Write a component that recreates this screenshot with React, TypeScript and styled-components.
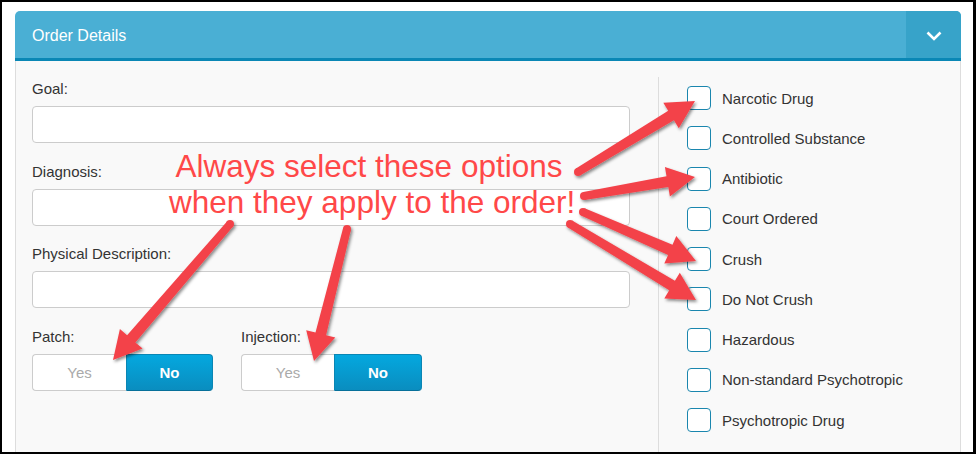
import React from "react";
import styled, { createGlobalStyle } from "styled-components";

const GlobalStyle = createGlobalStyle`
  html, body { margin: 0; padding: 0; background: #fff; }
  * { box-sizing: border-box; }
  body { font-family: "Liberation Sans", Arial, sans-serif; }
`;

const Page = styled.div`
  position: relative;
  width: 976px;
  height: 454px;
  border: 2px solid #000;
  border-right-width: 3px;
  background: #fff;
  padding: 9px 11px 0 13px;
  overflow: hidden;
  display: flex;
  flex-direction: column;
`;

const Panel = styled.div`
  width: 946px;
  height: 470px;
  display: flex;
  flex-direction: column;
  flex-shrink: 0;
`;

const Header = styled.div`
  height: 50px;
  display: flex;
  align-items: stretch;
  background: #4aafd4;
  border-bottom: 3px solid #0a87b5;
  border-radius: 5px 5px 0 0;
`;

const Title = styled.div`
  flex: 1;
  display: flex;
  align-items: center;
  padding: 3px 0 0 17px;
  color: #fff;
  font-size: 16px;
`;

const Collapse = styled.div`
  width: 55px;
  display: flex;
  align-items: center;
  justify-content: center;
  padding-top: 2px;
  background: #37a3c9;
  border-top-right-radius: 5px;
`;

const Body = styled.div`
  flex: 1;
  display: flex;
  background: #f9f9f9;
  border-left: 1px solid #ddd;
  border-right: 1px solid #ddd;
  padding-top: 16px;
`;

const LeftCol = styled.div`
  width: 642px;
  padding: 2px 28px 0 16px;
  display: flex;
  flex-direction: column;
`;

const RightCol = styled.div`
  flex: 1;
  border-left: 1px solid #ddd;
  padding: 9px 0 0 28px;
  display: flex;
  flex-direction: column;
  gap: 16.25px;
`;

const Field = styled.div`
  display: flex;
  flex-direction: column;
  gap: 7px;
  margin-bottom: 18.5px;
`;

const Label = styled.div`
  font-size: 15px;
  line-height: 20px;
  color: #333;
`;

const Input = styled.div`
  height: 37px;
  background: #fff;
  border: 1px solid #ccc;
  border-radius: 4px;
`;

const ToggleRow = styled.div`
  display: flex;
  gap: 28px;
`;

const Toggle = styled.div`
  width: 181px;
  height: 37px;
  display: flex;
`;

const ToggleOption = styled.div<{ $active?: boolean; $w: number }>`
  width: ${(p) => p.$w}px;
  display: flex;
  align-items: center;
  justify-content: center;
  font-size: 15px;
  font-weight: ${(p) => (p.$active ? 700 : 400)};
  color: ${(p) => (p.$active ? "#fff" : "#aaa")};
  background: ${(p) =>
    p.$active ? "linear-gradient(#04a8df, #0a8dbf)" : "#fff"};
  border: 1px solid ${(p) => (p.$active ? "#0a86b4" : "#ccc")};
  border-bottom-color: ${(p) => (p.$active ? "#07709a" : "#ccc")};
  border-right-width: ${(p) => (p.$active ? 1 : 0)}px;
  border-radius: ${(p) => (p.$active ? "0 4px 4px 0" : "4px 0 0 4px")};
`;

const CheckRow = styled.div`
  display: flex;
  align-items: center;
  height: 24px;
  gap: 11px;
`;

const Box = styled.div`
  width: 24px;
  height: 24px;
  background: #fff;
  border: 1px solid #1a86ae;
  border-radius: 4px;
`;

const CheckText = styled.span`
  font-size: 15px;
  color: #333;
`;

const Overlay = styled.div`
  position: absolute;
  left: -2px;
  top: -2px;
  width: 976px;
  height: 454px;
  pointer-events: none;
`;

const Note = styled.div`
  position: absolute;
  left: 169px;
  top: 148px;
  width: 400px;
  text-align: center;
  white-space: nowrap;
  font-size: 31.5px;
  line-height: 36px;
  color: #ff4848;
`;

const ArrowSvg = styled.svg`
  position: absolute;
  left: 0;
  top: 0;
`;

type Pt = [number, number];

function arrowPoints(tail: Pt, tip: Pt) {
  const dx = tip[0] - tail[0];
  const dy = tip[1] - tail[1];
  const len = Math.hypot(dx, dy);
  const ux = dx / len;
  const uy = dy / len;
  const nx = -uy;
  const ny = ux;
  const headLen = 28;
  const headHalf = 15;
  const w0 = 4;
  const w1 = 5.5;
  const bx = tip[0] - ux * headLen;
  const by = tip[1] - uy * headLen;
  const pts: Pt[] = [
    [tail[0] + nx * w0, tail[1] + ny * w0],
    [bx + nx * w1, by + ny * w1],
    [bx + nx * headHalf, by + ny * headHalf],
    tip,
    [bx - nx * headHalf, by - ny * headHalf],
    [bx - nx * w1, by - ny * w1],
    [tail[0] - nx * w0, tail[1] - ny * w0],
  ];
  return pts.map((p) => `${p[0].toFixed(1)},${p[1].toFixed(1)}`).join(" ");
}

const arrows: [Pt, Pt][] = [
  [[578, 172], [695, 101]],
  [[584, 196], [695, 177]],
  [[583, 212], [696, 261]],
  [[570, 224], [696, 300]],
  [[230, 224], [113, 360]],
  [[347, 229], [314, 361]],
];

const checks = [
  "Narcotic Drug",
  "Controlled Substance",
  "Antibiotic",
  "Court Ordered",
  "Crush",
  "Do Not Crush",
  "Hazardous",
  "Non-standard Psychotropic",
  "Psychotropic Drug",
];

export default function App() {
  return (
    <>
      <GlobalStyle />
      <Page>
        <Panel>
          <Header>
            <Title>Order Details</Title>
            <Collapse>
              <svg width="16" height="10" viewBox="0 0 16 10">
                <polyline
                  points="1.5,1.5 8,8 14.5,1.5"
                  fill="none"
                  stroke="#fff"
                  strokeWidth="2.6"
                />
              </svg>
            </Collapse>
          </Header>
          <Body>
            <LeftCol>
              <Field>
                <Label>Goal:</Label>
                <Input />
              </Field>
              <Field>
                <Label>Diagnosis:</Label>
                <Input />
              </Field>
              <Field>
                <Label>Physical Description:</Label>
                <Input />
              </Field>
              <ToggleRow>
                <Field>
                  <Label>Patch:</Label>
                  <Toggle>
                    <ToggleOption $w={94}>Yes</ToggleOption>
                    <ToggleOption $w={87} $active>
                      No
                    </ToggleOption>
                  </Toggle>
                </Field>
                <Field>
                  <Label>Injection:</Label>
                  <Toggle>
                    <ToggleOption $w={93}>Yes</ToggleOption>
                    <ToggleOption $w={88} $active>
                      No
                    </ToggleOption>
                  </Toggle>
                </Field>
              </ToggleRow>
            </LeftCol>
            <RightCol>
              {checks.map((c) => (
                <CheckRow key={c}>
                  <Box />
                  <CheckText>{c}</CheckText>
                </CheckRow>
              ))}
            </RightCol>
          </Body>
        </Panel>
        <Overlay>
          <Note>
            Always select these options
            <br />
            when they apply to the order!
          </Note>
          <ArrowSvg width="976" height="454" viewBox="0 0 976 454">
            <defs>
              <filter id="sh" x="-20%" y="-20%" width="140%" height="140%">
                <feDropShadow
                  dx="1.5"
                  dy="2"
                  stdDeviation="1.6"
                  floodColor="#000"
                  floodOpacity="0.45"
                />
              </filter>
            </defs>
            <g filter="url(#sh)" fill="#f3434a">
              {arrows.map(([tail, tip], i) => (
                <g key={i}>
                  <polygon points={arrowPoints(tail, tip)} />
                  <circle cx={tail[0]} cy={tail[1]} r={4} />
                </g>
              ))}
            </g>
          </ArrowSvg>
        </Overlay>
      </Page>
    </>
  );
}
